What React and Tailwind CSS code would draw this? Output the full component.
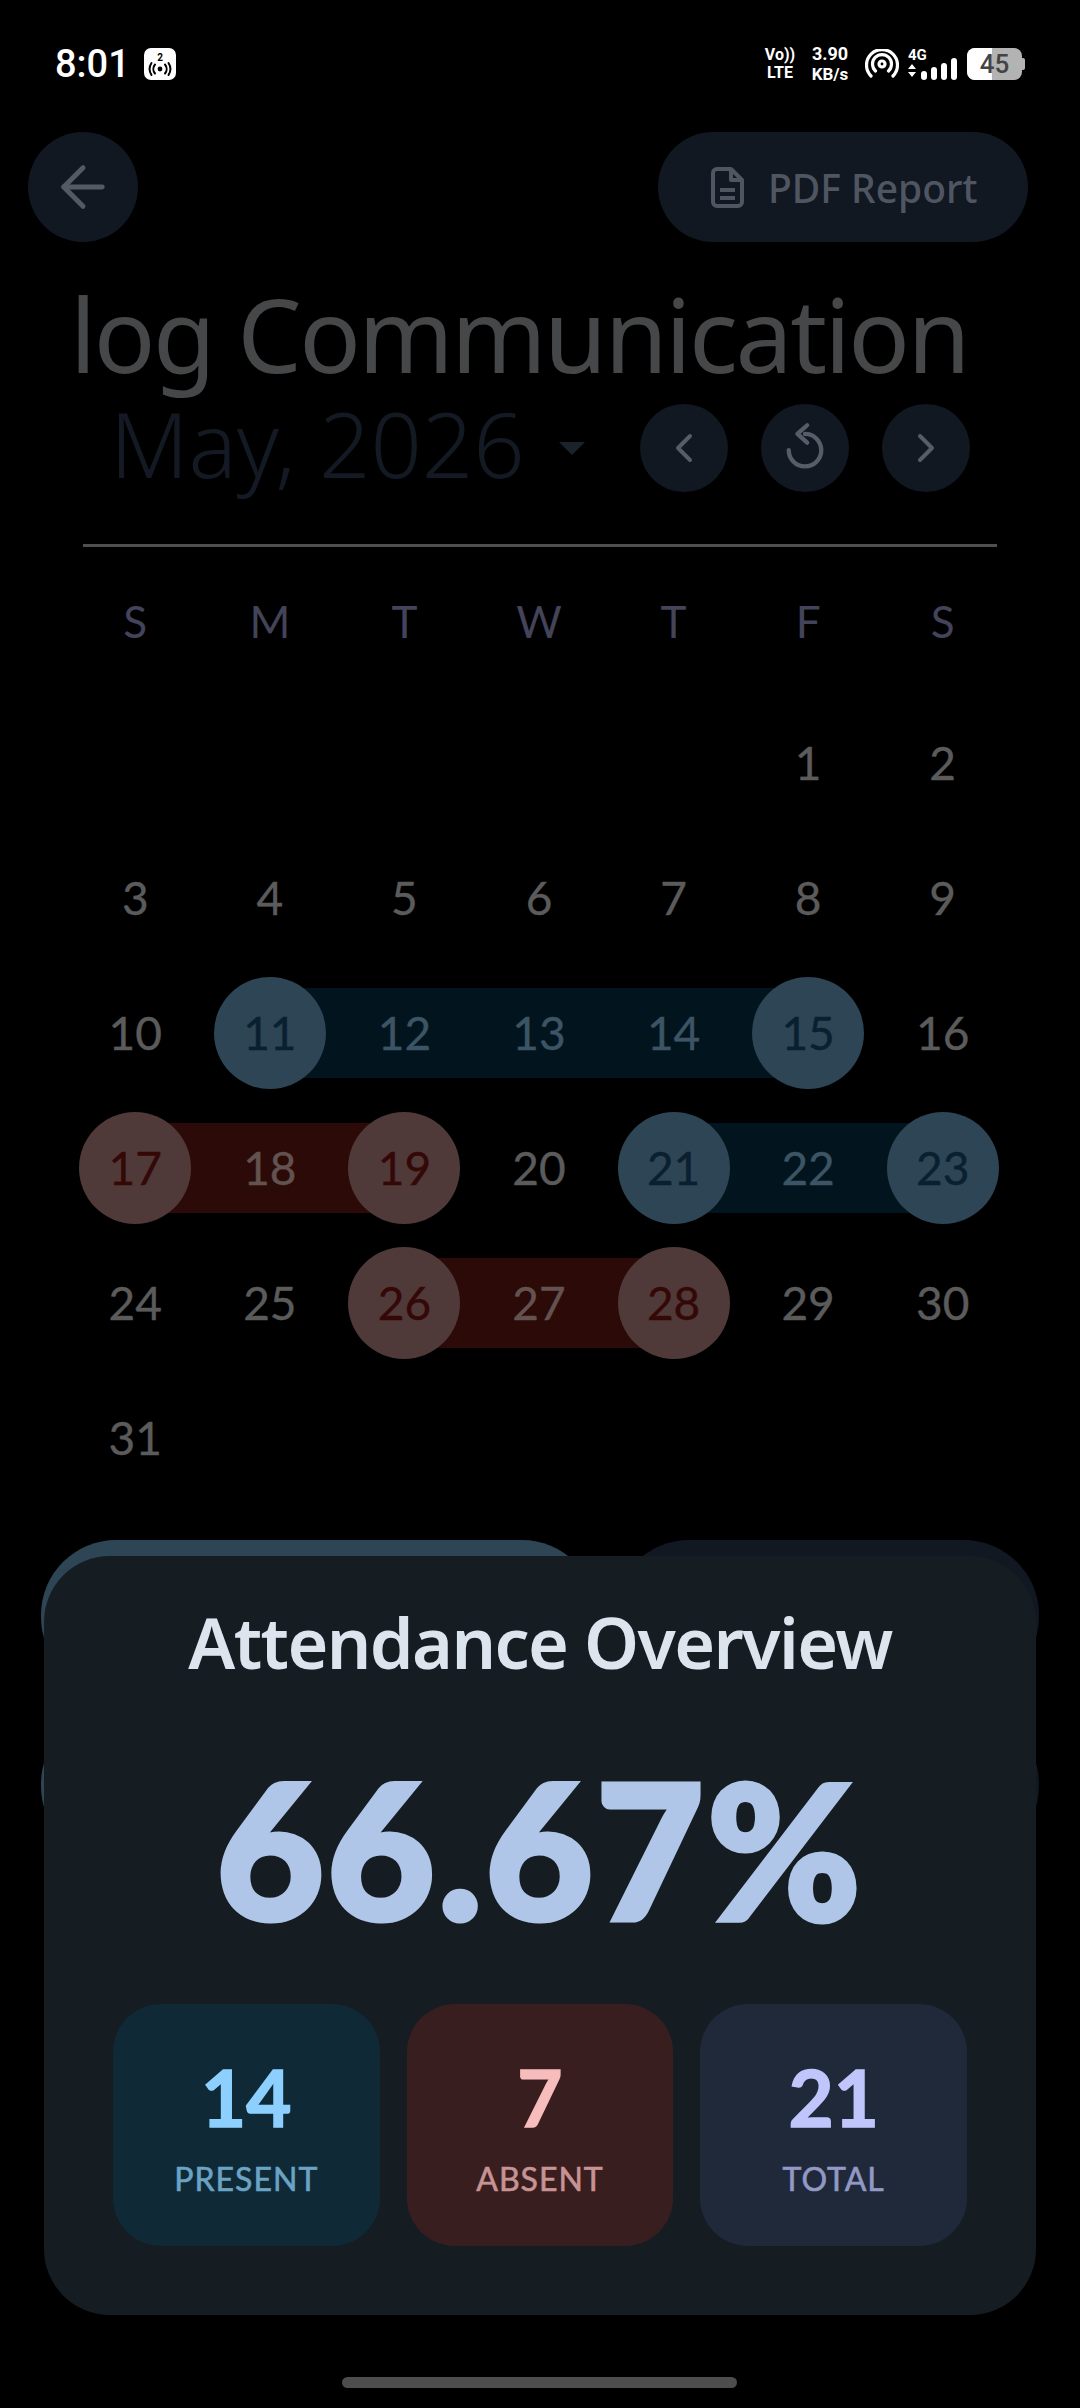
import React from "react";
import { ArrowLeft, ChevronLeft, ChevronRight } from "lucide-react";

const weekdays = ["S", "M", "T", "W", "T", "F", "S"];
const rows = [
  [null, null, null, null, null, 1, 2],
  [3, 4, 5, 6, 7, 8, 9],
  [10, 11, 12, 13, 14, 15, 16],
  [17, 18, 19, 20, 21, 22, 23],
  [24, 25, 26, 27, 28, 29, 30],
  [31, null, null, null, null, null, null],
];
const blue = { 11: "s", 12: "m", 13: "m", 14: "m", 15: "e", 21: "s", 22: "m", 23: "e" };
const red = { 17: "s", 18: "m", 19: "e", 26: "s", 27: "m", 28: "e" };

function Day({ n }) {
  if (!n) return <div className="h-[135px]" />;
  const kind = blue[n] || red[n];
  const isBlue = !!blue[n];
  const strip = isBlue ? "bg-[#02141e]" : "bg-[#2b0a07]";
  const circle = isBlue ? "bg-[#2d4554]" : "bg-[#4f3a39]";
  const ink = !kind
    ? "text-[#5b5b5b]"
    : kind === "m"
      ? isBlue ? "text-[#3c5464]" : "text-[#625250]"
      : isBlue ? "text-[#0a2030]" : "text-[#350808]";
  return (
    <div className="relative h-[135px] flex items-center justify-center">
      {kind === "m" && <div className={`absolute inset-x-0 h-[90px] ${strip}`} />}
      {kind === "s" && <div className={`absolute left-1/2 right-0 h-[90px] ${strip}`} />}
      {kind === "e" && <div className={`absolute left-0 right-1/2 h-[90px] ${strip}`} />}
      {kind && kind !== "m" && <div className={`absolute w-[112px] h-[112px] rounded-full ${circle}`} />}
      <span className={`relative text-[46px] leading-none [-webkit-text-stroke:0.4px] ${ink}`}>{n}</span>
    </div>
  );
}

function Stat({ value, label, bg, num, sub }) {
  return (
    <div className={`h-[242px] rounded-[48px] flex flex-col items-center ${bg}`}>
      <div className={`mt-[46px] h-[94px] flex items-center text-[78px] leading-none font-bold [-webkit-text-stroke:1.5px] ${num}`}>{value}</div>
      <div className={`mt-[19px] text-[32px] leading-none tracking-[1px] [-webkit-text-stroke:0.6px] ${sub}`}>{label}</div>
    </div>
  );
}

function RoundButton({ children }) {
  return (
    <div className="w-[88px] h-[88px] rounded-full bg-[#111821] flex items-center justify-center">{children}</div>
  );
}

export default function App() {
  return (
    <div className="relative w-[1080px] h-[2408px] overflow-hidden bg-black font-['Lato','Noto_Sans',sans-serif]">
      {/* status bar */}
      <div className="h-[132px] pl-[55px] pr-[55px] pt-[41px] flex items-start justify-between text-white">
        <div className="flex items-center h-[46px] gap-[14px]">
          <span className="text-[38px] font-medium leading-none font-['Roboto',sans-serif]">8:01</span>
          <div className="w-[32px] h-[32px] rounded-[7px] bg-white flex items-center justify-center">
            <svg width="28" height="28" viewBox="0 0 28 28" fill="none" stroke="#000" strokeWidth="2" strokeLinecap="round">
              <circle cx="14" cy="19" r="2.4" fill="#000" stroke="none" />
              <path d="M9 14.5a7 7 0 0 0 0 9M19 14.5a7 7 0 0 1 0 9M5.5 13a11 11 0 0 0 0 12M22.5 13a11 11 0 0 1 0 12" />
              <text x="14" y="11" fontSize="10" fontWeight="700" textAnchor="middle" fill="#000" stroke="none" fontFamily="Roboto">2</text>
            </svg>
          </div>
        </div>
        <div className="flex items-center h-[46px] font-['Roboto',sans-serif] font-bold">
          <div className="w-[30px] flex flex-col items-center text-[16px] leading-[18px]">
            <span className="whitespace-nowrap">Vo))</span>
            <span>LTE</span>
          </div>
          <div className="ml-[14px] w-[42px] flex flex-col items-center text-[18px] leading-[20px]">
            <span>3.90</span>
            <span className="text-[17px]">KB/s</span>
          </div>
          <svg width="34" height="30" viewBox="0 0 34 30" fill="none" stroke="#fff" strokeWidth="3.2" strokeLinecap="round" className="ml-[14px]">
            <circle cx="17" cy="15" r="3" />
            <path d="M10.5 22a9.5 9.5 0 1 1 13 0M6 27a15.5 15.5 0 1 1 22 0" />
          </svg>
          <div className="ml-[9px] w-[50px] flex flex-col">
            <span className="text-[15px] leading-[16px]">4G</span>
            <svg width="50" height="24" viewBox="0 0 50 24" fill="#fff" className="-mt-[5px]">
              <path d="M0 11l4-5 4 5zM0 14h8l-4 5z" />
              <rect x="13" y="13" width="6" height="9" rx="3" />
              <rect x="23" y="9" width="6" height="13" rx="3" />
              <rect x="33" y="5" width="6" height="17" rx="3" />
              <rect x="43" y="0" width="6" height="22" rx="3" />
            </svg>
          </div>
          <div className="ml-[9px] relative w-[55px] h-[32px] rounded-[8px] bg-[#b3b3b3] overflow-hidden flex items-center justify-center">
            <div className="absolute inset-y-0 left-0 w-[25px] bg-white" />
            <span className="relative text-[26px] font-medium leading-none text-[#444]">45</span>
          </div>
          <div className="w-[3px] h-[12px] rounded-r-[2px] bg-[#b3b3b3]" />
        </div>
      </div>

      {/* app bar */}
      <div className="pl-[28px] pr-[52px] flex items-center justify-between">
        <div className="w-[110px] h-[110px] rounded-full bg-[#111821] flex items-center justify-center">
          <ArrowLeft size={66} strokeWidth={1.8} color="#545a63" />
        </div>
        <div className="w-[370px] h-[110px] rounded-full bg-[#111821] flex items-center pl-[53px] gap-[24px] text-[#4f5661]">
          <svg width="33" height="41" viewBox="0 0 33 41" fill="none" stroke="currentColor" strokeWidth="4" strokeLinejoin="round">
            <path d="M2 6a4 4 0 0 1 4-4h14l11 11v22a4 4 0 0 1-4 4H6a4 4 0 0 1-4-4z" />
            <path d="M20 2v11h11M9 23h15M9 31h15" />
          </svg>
          <span className="text-[39px] font-medium leading-none font-['Noto_Sans',sans-serif]">PDF Report</span>
        </div>
      </div>

      {/* title */}
      <div className="mt-[37px] h-[110px] pr-[42px] flex justify-center">
        <h1 className="text-[102px] font-normal leading-[110px] tracking-[-2.5px] text-[#454748] whitespace-nowrap font-['Noto_Sans',sans-serif]">log Communication</h1>
      </div>

      {/* month row */}
      <div className="mt-[13px] pl-[110px] pr-[110px] h-[92px] flex items-center">
        <span className="mb-[10px] text-[90px] font-light leading-none text-[#141a24] whitespace-nowrap font-['Noto_Sans',sans-serif]">May, 2026</span>
        <div className="ml-[34px] w-0 h-0 border-x-[13px] border-x-transparent border-t-[13px] border-t-[#1a222b]" />
        <div className="ml-auto flex gap-[33px]">
          <RoundButton><ChevronLeft size={48} strokeWidth={2} color="#565c68" /></RoundButton>
          <RoundButton>
            <svg width="52" height="52" viewBox="0 0 24 24" fill="none" stroke="#565c68" strokeWidth="2" strokeLinecap="round" strokeLinejoin="round">
              <path d="M12 5.5a7.5 7.5 0 1 1-7.5 7.5" />
              <path d="M13 1.5 8.5 5.5l4.5 4" />
            </svg>
          </RoundButton>
          <RoundButton><ChevronRight size={48} strokeWidth={2} color="#565c68" /></RoundButton>
        </div>
      </div>

      <div className="mt-[50px] mx-[83px] h-[3px] bg-[#4f4f4f]" />

      {/* calendar */}
      <div className="ml-[68px] w-[942px]">
        <div className="mt-[36px] grid grid-cols-7 h-[76px] items-center text-center text-[44px] leading-none text-[#43435a]">
          {weekdays.map((d, i) => <div key={i}>{d}</div>)}
        </div>
        <div className="mt-[36px] grid grid-cols-7">
          {rows.flat().map((n, i) => <Day key={i} n={n} />)}
        </div>
      </div>

      {/* cards behind the sheet */}
      <div className="mt-[35px] ml-[41px] w-[998px] grid grid-cols-[556px_425px] gap-[17px]">
        <div className="h-[152px] rounded-[75px] bg-[#2d4554]" />
        <div className="h-[152px] rounded-[75px] bg-[#111821]" />
        <div className="h-[152px] rounded-[75px] bg-[#2d4554]" />
        <div className="h-[152px] rounded-[75px] bg-[#111821]" />
      </div>

      {/* bottom sheet */}
      <div className="absolute left-[44px] top-[1556px] w-[992px] h-[759px] rounded-[66px] bg-[#151d23]">
        <div className="mt-[46px] text-center text-[70px] leading-[80px] tracking-[-1.6px] font-semibold text-[#dce5ee] font-['Noto_Sans',sans-serif]">Attendance Overview</div>
        <div className="mt-[66px] text-center text-[186px] leading-[200px] tracking-[3px] font-black [-webkit-text-stroke:5px] text-[#b0c6e8]">66.67%</div>
        <div className="mt-[56px] mx-[69px] grid grid-cols-3 gap-[27px]">
          <Stat value="14" label="PRESENT" bg="bg-[#0f2a36]" num="text-[#8dd0ff]" sub="text-[#6ba3c5]" />
          <Stat value="7" label="ABSENT" bg="bg-[#391e20]" num="text-[#f7bcbc]" sub="text-[#c79393]" />
          <Stat value="21" label="TOTAL" bg="bg-[#20293a]" num="text-[#c0c6fb]" sub="text-[#9199c4]" />
        </div>
      </div>

      {/* home indicator */}
      <div className="absolute left-[342px] top-[2377px] w-[395px] h-[11px] rounded-full bg-[#4d4d4d]" />
    </div>
  );
}
